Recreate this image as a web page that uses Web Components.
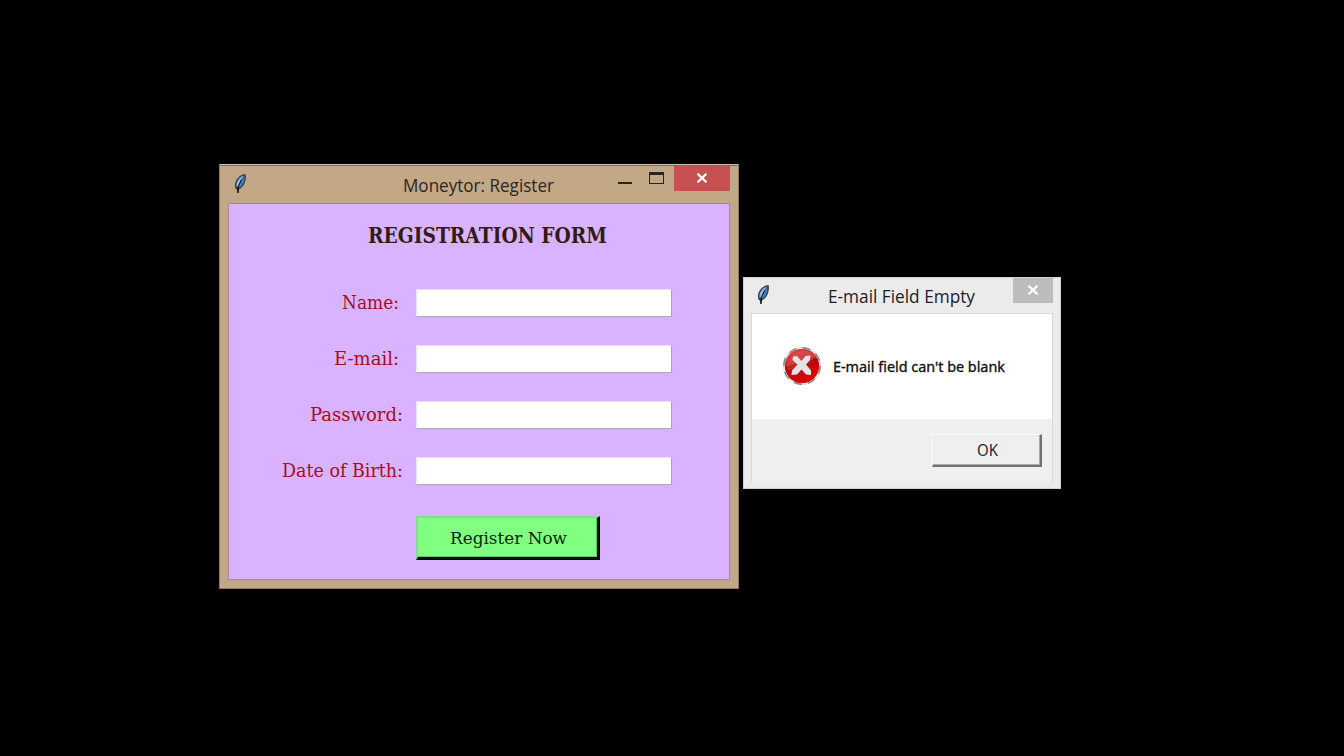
<!DOCTYPE html>
<html lang="en">
<head>
<meta charset="utf-8">
<title>Moneytor: Register</title>
<style>
html,body{margin:0;height:100%;background:#000;overflow:hidden}
</style>
</head>
<body>
<desk-top></desk-top>
<script>
const define=(name,html,ready)=>{
  const t=document.createElement('template');
  t.innerHTML=html;
  customElements.define(name,class extends HTMLElement{
    connectedCallback(){
      if(this.shadowRoot)return;
      this.attachShadow({mode:'open'}).append(t.content.cloneNode(true));
      if(ready)ready(this,this.shadowRoot);
    }
  });
};

/* One line of text condensed or widened to the width given in "w". */
define('fit-text',`<style>
:host{display:inline-block;white-space:nowrap;text-align:left}
span{display:inline-block;transform-origin:0 50%}
</style><span><slot></slot></span>`,(el,root)=>{
  const s=root.querySelector('span'),w=+el.getAttribute('w');
  el.style.width=w+'px';
  const fit=()=>{s.style.transform='none';const n=s.getBoundingClientRect().width;if(n)s.style.transform='scaleX('+w/n+')'};
  fit();
  requestAnimationFrame(fit);
});

define('feather-icon',`<style>:host{display:block;width:14px;height:22px}svg{display:block}</style>
<svg width="14" height="22" viewBox="0 0 14 22">
<path d="M12.500 1C8.500 1 4.300 4.400 2.500 9c-.9 2.600-.8 5 .1 6.500L4.600 17.500 7.500 15.500c3-2 4.500-5 5.200-9 .3-2 .4-4-.2-5.500Z" fill="#39434e"/>
<path d="M10.800 2.500C7.200 3.900 4.500 7 3.600 10.500L3.500 14 5.500 12.500Z" fill="#91b9e6"/>
<path d="M11.400 3 4.800 15 7.200 14C10.200 11.500 11.700 7.500 11.400 3Z" fill="#4382cc"/>
<path d="M8.500 6.300 5.500 13.200 5 19.500" fill="none" stroke="#0f1722" stroke-width="1"/>
<path d="m3 14 1.200 2v4h1.300l.4-4" fill="#201b19"/>
</svg>`);

define('close-button',`<style>
:host{display:flex;width:var(--w);height:25px;background:var(--c);align-items:center;justify-content:center;box-sizing:border-box;padding:0 1px 2px 0}
</style><svg width="12" height="10" viewBox="0 0 12 10"><path d="M1.500 .7 10.500 9.300M10.500 .7 1.500 9.300" stroke="#fff" stroke-width="2.200"/></svg>`);

define('window-controls',`<style>
:host{display:flex;align-items:flex-start}
.min{width:14px;height:2px;margin:16px 17px 0 0;background:#28251f}
.max{width:15px;height:12px;margin:6px 10px 0 0;box-sizing:border-box;border:1px solid #28251f;border-top-width:3px}
</style><div class="min"></div><div class="max"></div><slot></slot>`);

define('app-window',`<style>
:host{position:absolute;display:flex;flex-direction:column;box-sizing:border-box;font-family:"Open Sans","Noto Sans",sans-serif}
.bar{display:flex;flex:none;height:var(--bar)}
.icon{width:var(--icon-w);padding:var(--icon-pad);box-sizing:border-box}
.title{flex:1;font-size:17.500px;line-height:24px;color:var(--ink);padding-top:var(--title-top)}
.client{flex:1;min-height:0;box-sizing:border-box}
</style>
<div class="bar"><div class="icon"><feather-icon></feather-icon></div><div class="title"><slot name="title"></slot></div><slot name="controls"></slot></div>
<div class="client"><slot></slot></div>`);

define('text-field',`<style>
:host{display:block}
input{display:block;box-sizing:border-box;width:255.500px;height:28px;margin:0;padding:0 4px;border:solid;border-width:1px;border-color:#eadfff #aaa6af #aaa6af #eadfff;background:#fff;outline:0;border-radius:0;font:17px "DejaVu Serif",serif}
</style><input type="text">`);

define('form-row',`<style>
:host{display:grid;grid-template-columns:187px 1fr;height:56.250px;align-items:start}
.label{text-align:right;font:18.500px/28px "DejaVu Serif",serif;color:#a50d22;padding-right:var(--gap,13px)}
</style><label class="label"><slot></slot></label><text-field></text-field>`);

define('register-form',`<style>
:host{display:block;box-sizing:border-box;height:100%;background:#d9b3ff;padding-top:18px}
h1{margin:0 0 39.500px 139px;height:27px;font:bold 22px/27px "DejaVu Serif",serif;color:#331b12}
button{display:block;margin:2px 0 0 187px;width:184px;height:44px;box-sizing:border-box;padding:2px 0 0 2px;border:solid;border-width:2px 3px 3px 2px;border-color:#83dc8f #050805 #050805 #83dc8f;background:#80ff80;box-shadow:inset -1px -1px 0 #61c761;border-radius:0;font:17.500px/37px "DejaVu Serif",serif;color:#06250c}
</style>
<h1><fit-text w="239">REGISTRATION FORM</fit-text></h1>
<form-row style="--gap:17px"><fit-text w="57">Name:</fit-text></form-row>
<form-row style="--gap:17px"><fit-text w="65">E-mail:</fit-text></form-row>
<form-row><fit-text w="93">Password:</fit-text></form-row>
<form-row><fit-text w="121">Date of Birth:</fit-text></form-row>
<button type="button"><fit-text w="117">Register Now</fit-text></button>`);

define('error-icon',`<style>:host{display:block;width:40px;height:40px}svg{display:block}</style>
<svg width="40" height="40" viewBox="0 0 40 40">
<defs><linearGradient id="r" x1="0" y1="0" x2=".3" y2="1"><stop stop-color="#de4c4c"/><stop offset=".46" stop-color="#cb2b2b"/><stop offset=".52" stop-color="#b90808"/><stop offset="1" stop-color="#d60b0b"/></linearGradient></defs>
<circle cx="20" cy="20" r="18.600" fill="#fafafa" stroke="#dadada"/>
<circle cx="20" cy="20" r="18.300" fill="none" stroke="#858585" stroke-width="1.400" stroke-dasharray="8 6.370"/>
<circle cx="20" cy="20" r="17.300" fill="url(#r)"/>
<path d="M5 24C15 25 26 19 34 10A17 17 0 0 0 5 24Z" fill="#ed8585" opacity=".2"/>
<path d="M11 10.500 15 10 19.500 15 23.500 10 28.500 9.500 28 14 24 18.500 29 24.500V29L24 28.500 19.500 23.500 15 28.500 9.500 29 10 24.500 15.500 18.500 10.500 14Z" fill="#e2e3e3"/>
</svg>`);

define('error-message',`<style>
:host{display:flex;flex-direction:column;height:100%;font-family:"Noto Sans",sans-serif}
.body{display:flex;height:105px;background:#fff;box-sizing:border-box;padding:32px 0 0 30px}
.text{margin:8px 0 0 11px;font-size:15px;line-height:24px;color:#111;-webkit-text-stroke:.35px #111}
.foot{flex:1;background:#efefef;display:flex;justify-content:flex-end;align-items:flex-start;padding:15px 10px 0 0}
button{width:110px;height:33px;box-sizing:border-box;padding:0 0 0 2px;border:solid;border-width:1px 2px 2px 1px;border-color:#fff #707070 #707070 #fff;box-shadow:inset -1px -1px 0 #aaa,inset 1px 1px 0 #e7e7e7;background:#efefef;border-radius:0;font:15.500px/28px "Noto Sans",sans-serif;color:#282828}
</style>
<div class="body"><error-icon></error-icon><div class="text"><fit-text w="172">E-mail field can't be blank</fit-text></div></div>
<div class="foot"><button type="button"><fit-text w="21">OK</fit-text></button></div>`);

define('desk-top',`<style>
:host{display:block;position:relative;width:1344px;height:756px;background:#000;overflow:hidden}
.register{left:219px;top:164px;width:520px;height:425px;background:#c3a888;border:1px solid #91785f;border-top:1px solid #c4c1bc;box-shadow:inset 0 1px 0 #806c56;padding:1px 8px 8px;--bar:37px;--icon-w:175px;--icon-pad:7px 0 0 5px;--title-top:7px;--ink:#292724}
.register register-form{width:502px;height:377px;border:1px solid #a88aa0;border-top-color:#a18b7b;box-sizing:border-box}
.alert{left:743px;top:277px;width:318px;height:212px;background:#ebebeb;border:1px solid #d0d0d0;padding:0 7px 7px;--bar:35px;--icon-w:77px;--icon-pad:6px 0 0 5px;--title-top:6px;--ink:#1c1c2b}
.alert error-message{width:302px;height:169px;border:1px solid #d9d9d9;border-bottom:0;box-sizing:border-box}
</style>
<app-window class="register">
<fit-text slot="title" w="151">Moneytor: Register</fit-text>
<window-controls slot="controls"><close-button style="--w:56px;--c:#c75050"></close-button></window-controls>
<register-form></register-form>
</app-window>
<app-window class="alert">
<fit-text slot="title" w="147">E-mail Field Empty</fit-text>
<close-button slot="controls" style="--w:40px;--c:#bcbcbc"></close-button>
<error-message></error-message>
</app-window>`);
</script>
</body>
</html>
